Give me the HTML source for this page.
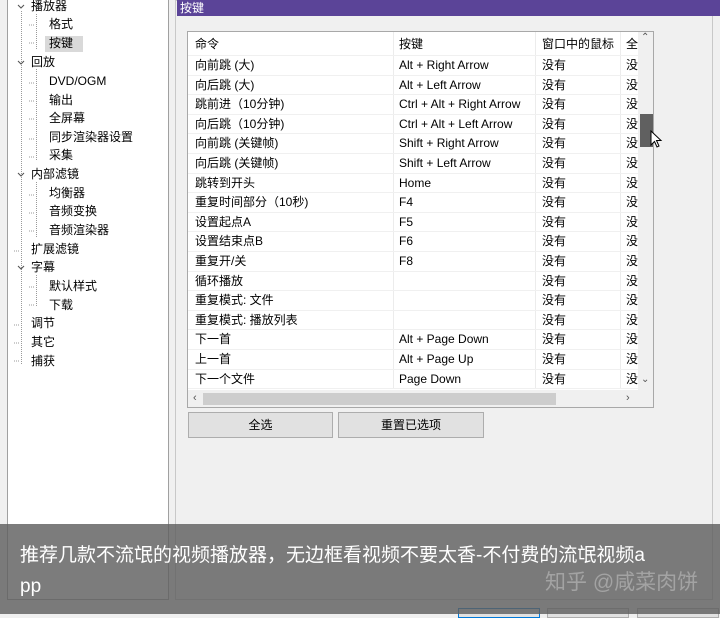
<html><head><style>
body{margin:0;width:720px;height:614px;background:#f0f0f0;position:relative;overflow:hidden;font-family:"Liberation Sans","Noto Sans CJK SC",sans-serif;font-size:12px;color:#000}
.abs{position:absolute}
#tree{left:7px;top:-2px;width:162px;height:602px;background:#fff;border:1px solid #a0a0a0;box-sizing:border-box}
.ti{position:absolute;white-space:nowrap;font-size:12px;line-height:16px}
#right{left:175px;top:0;width:538px;height:600px;border:1px solid #c8c8c8;box-sizing:border-box;background:#f0f0f0}
#hdr{left:177px;top:0;width:543px;height:16px;background:#5b4498;color:#fff;font-size:12px;line-height:16px;padding-left:3px;box-sizing:border-box}
#tbl{left:187px;top:31px;width:467px;height:377px;background:#fff;border:1px solid #a8a8a8;box-sizing:border-box;overflow:hidden}
.row{position:absolute;left:0;height:19.6px;width:450px;border-bottom:1px solid #f0f0f0;box-sizing:border-box;line-height:19px;white-space:nowrap}
.row span{position:absolute;top:0}
.c1{left:7px}.c2{left:211px}.c3{left:354px}.c4{left:438px}
.vl{position:absolute;top:0;width:1px;height:356px;background:#ececec}
.btn{position:absolute;top:412px;height:26px;background:#e1e1e1;border:1px solid #adadad;box-sizing:border-box;text-align:center;line-height:24px;font-size:12px}
#ov{left:0;top:524px;width:720px;height:90px;background:rgba(95,95,95,0.82)}
</style></head><body>
<div id="tree" class="abs">
<svg class="abs" style="left:0;top:0" width="160" height="380">
<g stroke="#999" stroke-dasharray="1,1" fill="none">
<path d="M13.5 12V48 M28.5 15V50 M21 26H27 M21 44H27"/>
<path d="M28.5 70V162 M21 84H27 M21 102H27 M21 120H27 M21 140H27 M21 158H27"/>
<path d="M28.5 183V238 M21 196H27 M21 214H27 M21 232H27"/>
<path d="M13.5 12V366 M6 252H12 M6 326H12 M6 344H12 M6 362H12"/>
<path d="M28.5 276V308 M21 288H27 M21 306H27"/>
</g>
<g stroke="#555" fill="none" stroke-width="1.1">
<path d="M10 6l3 3 3-3 M10 62l3 3 3-3 M10 174l3 3 3-3 M10 267l3 3 3-3"/>
</g>
</svg>
<div class="abs" style="left:37px;top:37px;width:38px;height:16px;background:#d9d9d9"></div>
<div class="ti" style="left:23px;top:-1px">播放器</div>
<div class="ti" style="left:41px;top:17px">格式</div>
<div class="ti" style="left:41px;top:36px">按键</div>
<div class="ti" style="left:23px;top:55px">回放</div>
<div class="ti" style="left:41px;top:74px">DVD/OGM</div>
<div class="ti" style="left:41px;top:93px">输出</div>
<div class="ti" style="left:41px;top:111px">全屏幕</div>
<div class="ti" style="left:41px;top:130px">同步渲染器设置</div>
<div class="ti" style="left:41px;top:148px">采集</div>
<div class="ti" style="left:23px;top:167px">内部滤镜</div>
<div class="ti" style="left:41px;top:186px">均衡器</div>
<div class="ti" style="left:41px;top:204px">音频变换</div>
<div class="ti" style="left:41px;top:223px">音频渲染器</div>
<div class="ti" style="left:23px;top:242px">扩展滤镜</div>
<div class="ti" style="left:23px;top:260px">字幕</div>
<div class="ti" style="left:41px;top:279px">默认样式</div>
<div class="ti" style="left:41px;top:298px">下载</div>
<div class="ti" style="left:23px;top:316px">调节</div>
<div class="ti" style="left:23px;top:335px">其它</div>
<div class="ti" style="left:23px;top:354px">捕获</div>
</div>
<div id="right" class="abs"></div>
<div id="hdr" class="abs">按键</div>
<div id="tbl" class="abs">
<div class="vl" style="left:205px"></div><div class="vl" style="left:347px"></div><div class="vl" style="left:432px"></div>
<div class="row" style="top:0;height:24px;line-height:24px"><span class="c1">命令</span><span class="c2">按键</span><span class="c3">窗口中的鼠标</span><span class="c4">全</span></div>
<div class="row" style="top:24px"><span class="c1">向前跳 (大)</span><span class="c2">Alt + Right Arrow</span><span class="c3">没有</span><span class="c4">没</span></div>
<div class="row" style="top:43.6px"><span class="c1">向后跳 (大)</span><span class="c2">Alt + Left Arrow</span><span class="c3">没有</span><span class="c4">没</span></div>
<div class="row" style="top:63.2px"><span class="c1">跳前进（10分钟)</span><span class="c2">Ctrl + Alt + Right Arrow</span><span class="c3">没有</span><span class="c4">没</span></div>
<div class="row" style="top:82.8px"><span class="c1">向后跳（10分钟)</span><span class="c2">Ctrl + Alt + Left Arrow</span><span class="c3">没有</span><span class="c4">没</span></div>
<div class="row" style="top:102.4px"><span class="c1">向前跳 (关键帧)</span><span class="c2">Shift + Right Arrow</span><span class="c3">没有</span><span class="c4">没</span></div>
<div class="row" style="top:122px"><span class="c1">向后跳 (关键帧)</span><span class="c2">Shift + Left Arrow</span><span class="c3">没有</span><span class="c4">没</span></div>
<div class="row" style="top:141.6px"><span class="c1">跳转到开头</span><span class="c2">Home</span><span class="c3">没有</span><span class="c4">没</span></div>
<div class="row" style="top:161.2px"><span class="c1">重复时间部分（10秒)</span><span class="c2">F4</span><span class="c3">没有</span><span class="c4">没</span></div>
<div class="row" style="top:180.8px"><span class="c1">设置起点A</span><span class="c2">F5</span><span class="c3">没有</span><span class="c4">没</span></div>
<div class="row" style="top:200.4px"><span class="c1">设置结束点B</span><span class="c2">F6</span><span class="c3">没有</span><span class="c4">没</span></div>
<div class="row" style="top:220px"><span class="c1">重复开/关</span><span class="c2">F8</span><span class="c3">没有</span><span class="c4">没</span></div>
<div class="row" style="top:239.6px"><span class="c1">循环播放</span><span class="c3">没有</span><span class="c4">没</span></div>
<div class="row" style="top:259.2px"><span class="c1">重复模式: 文件</span><span class="c3">没有</span><span class="c4">没</span></div>
<div class="row" style="top:278.8px"><span class="c1">重复模式: 播放列表</span><span class="c3">没有</span><span class="c4">没</span></div>
<div class="row" style="top:298.4px"><span class="c1">下一首</span><span class="c2">Alt + Page Down</span><span class="c3">没有</span><span class="c4">没</span></div>
<div class="row" style="top:318px"><span class="c1">上一首</span><span class="c2">Alt + Page Up</span><span class="c3">没有</span><span class="c4">没</span></div>
<div class="row" style="top:337.6px"><span class="c1">下一个文件</span><span class="c2">Page Down</span><span class="c3">没有</span><span class="c4">没</span></div>
<div class="abs" style="left:450px;top:0;width:16px;height:358px;background:#f0f0f0"></div>
<div class="abs" style="left:452px;top:82px;width:13px;height:33px;background:#606060"></div>
<div class="abs" style="left:453px;top:0;font-size:10px;color:#555">&#8963;</div>
<div class="abs" style="left:453px;top:342px;font-size:10px;color:#555">&#8964;</div>
<div class="abs" style="left:0;top:358px;width:466px;height:17px;background:#f0f0f0"></div>
<div class="abs" style="left:15px;top:361px;width:353px;height:12px;background:#cdcdcd"></div>
<div class="abs" style="left:5px;top:358px;font-size:11px;line-height:17px;color:#555">&lsaquo;</div>
<div class="abs" style="left:438px;top:358px;font-size:11px;line-height:17px;color:#555">&rsaquo;</div>
</div>
<div class="btn" style="left:188px;width:145px">全选</div>
<div class="btn" style="left:338px;width:146px">重置已选项</div>
<svg class="abs" style="left:650px;top:130px" width="14" height="20"><path d="M1 1V15L4.5 11.5L7 17L9 16L6.5 10.5H11Z" fill="#fff" stroke="#000"/></svg>
<div class="abs" style="left:458px;top:608px;width:80px;height:8px;border:1px solid #0078d7;background:#e1e1e1"></div>
<div class="abs" style="left:547px;top:608px;width:80px;height:8px;border:1px solid #adadad;background:#e1e1e1"></div>
<div class="abs" style="left:637px;top:608px;width:80px;height:8px;border:1px solid #adadad;background:#e1e1e1"></div>
<div id="ov" class="abs"></div>
<div class="abs" style="left:20px;top:540px;color:#fff;font-size:19px;line-height:31px;width:695px">推荐几款不流氓的视频播放器，无边框看视频不要太香-不付费的流氓视频a<br>pp</div>
<div class="abs" style="left:545px;top:568px;color:rgba(190,190,190,0.6);font-size:21px;line-height:30px">知乎 @咸菜肉饼</div>
</body></html>
